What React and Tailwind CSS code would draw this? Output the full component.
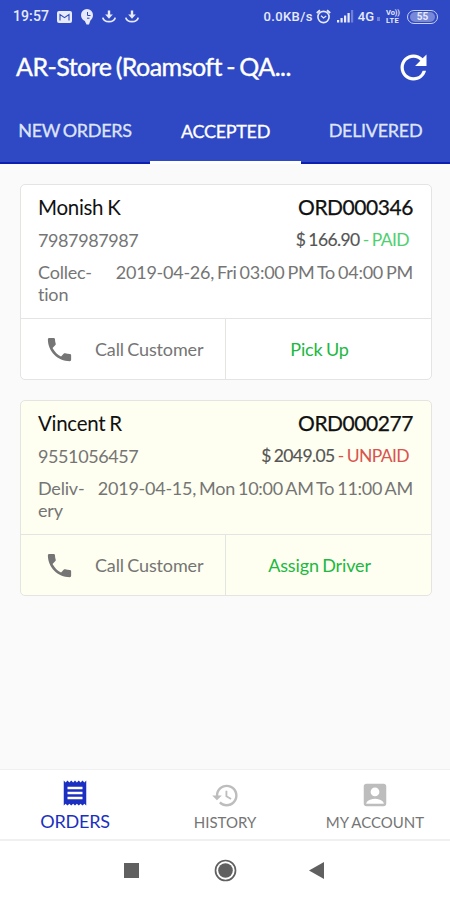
import { useState } from 'react';
import { MdRefresh, MdPhone, MdReceipt, MdHistory, MdAccountBox } from 'react-icons/md';

const orders = [
  {
    id: 'ORD000346',
    name: 'Monish K',
    phone: '7987987987',
    amount: '$ 166.90',
    status: 'PAID',
    type: ['Collec-', 'tion'],
    slot: '2019-04-26, Fri 03:00 PM To 04:00 PM',
    action: 'Pick Up',
  },
  {
    id: 'ORD000277',
    name: 'Vincent R',
    phone: '9551056457',
    amount: '$ 2049.05',
    status: 'UNPAID',
    type: ['Deliv-', 'ery'],
    slot: '2019-04-15, Mon 10:00 AM To 11:00 AM',
    action: 'Assign Driver',
  },
];

const tabs = ['NEW ORDERS', 'ACCEPTED', 'DELIVERED'];

function DownloadIcon() {
  return (
    <svg width="14" height="14" viewBox="0 0 14 14" fill="none" stroke="currentColor">
      <path d="M7 0.5v5" strokeWidth="2.4" />
      <path d="M3.2 4.4h7.6L7 8.8z" fill="currentColor" stroke="none" />
      <path d="M0.8 7.6c1.2 5.4 11.2 5.4 12.4 0" strokeWidth="1.8" />
    </svg>
  );
}

function StatusBar() {
  return (
    <div className="flex h-[33px] items-center pl-[13px] pr-[12px] font-[Roboto] text-[#e6eafb]">
      <span className="w-[37px] text-[14px] font-medium tracking-[0.1px]">19:57</span>
      <svg className="ml-[7px]" width="15" height="12" viewBox="0 0 15 12">
        <rect width="15" height="12" rx="2" fill="currentColor" />
        <path d="M3 9.5v-6l4.5 3.2L12 3.5v6" fill="none" stroke="#2f49c4" strokeWidth="1.1" />
      </svg>
      <svg className="ml-[9px]" width="12" height="16" viewBox="0 0 12 16">
        <path d="M6 0a6 6 0 0 1 6 6c0 2.6-1.2 4.2-2.6 5.4L8 15.500H5.500L3.800 12C1.600 11 0 9 0 6a6 6 0 0 1 6-6z" fill="currentColor" />
        <path d="M6.500 3v3.500H9.500M6 9.200h2.500" fill="none" stroke="#2f49c4" strokeWidth="1" />
      </svg>
      <span className="ml-[9px]"><DownloadIcon /></span>
      <span className="ml-[9px]"><DownloadIcon /></span>

      <div className="ml-auto flex items-center">
        <span className="text-[13px] font-medium tracking-[0.4px]">0.0KB/s</span>
        <svg className="ml-[3px]" width="15" height="15" viewBox="0 0 15 15" fill="none" stroke="currentColor">
          <circle cx="7.5" cy="8" r="5.6" strokeWidth="1.6" />
          <path d="M0.8 4L4 1.200M14.200 4L11 1.200" strokeWidth="1.800" />
          <path d="M5 6.800L7.500 9l2.700-2" strokeWidth="1.2" />
        </svg>
        <svg className="ml-[6px]" width="17" height="13" viewBox="0 0 17 13" fill="currentColor">
          <rect x="0" y="10" width="2.2" height="2.5" />
          <rect x="3.5" y="8" width="2.2" height="4.5" />
          <rect x="7" y="5.5" width="2.2" height="7" />
          <rect x="10.5" y="3" width="2.2" height="9.5" />
          <rect x="14" y="0" width="2.2" height="12.5" opacity="0.35" />
        </svg>
        <span className="ml-[4px] text-[13px] font-medium">4G</span>
        <span className="ml-[3px] mt-1 h-[4px] w-[3px] bg-white/30" />
        <span className="ml-[6px] flex w-[15px] flex-col text-[7.5px] font-bold leading-[8px]">
          <span className="tracking-[-0.1px]">Vo))</span>
          <span className="tracking-[0.3px]">LTE</span>
        </span>
        <span className="ml-[6px] flex h-[14px] w-[31px] items-center justify-center rounded-full border-[1.5px] border-[#c9d1f5]">
          <span className="flex h-[10px] w-[25px] items-center justify-center rounded-full bg-white/35 text-[10px] font-bold leading-none">55</span>
        </span>
      </div>
    </div>
  );
}

function OrderCard({ order }) {
  const paid = order.status === 'PAID';

  return (
    <div className={`h-[196px] overflow-hidden rounded-[5px] border border-[#e4e4e2] ${paid ? 'bg-white' : 'bg-[#fefff0]'}`}>
      <div className="h-[134px] border-b border-[#e4e4e2] pl-[17px] pr-[18px] pt-[8px] text-[18px] text-[#757575]">
        <div className="flex justify-between leading-[28px] text-[#111]">
          <span className="text-[20.5px] tracking-[-0.3px] [word-spacing:-1px]">{order.name}</span>
          <span className="text-[21px] tracking-[-0.45px] [-webkit-text-stroke:0.25px]">{order.id}</span>
        </div>
        <div className="mt-[7px] flex justify-between leading-[24px]">
          <span className="tracking-[-0.4px]">{order.phone}</span>
          <span className="pr-[4px] text-[17.5px] tracking-[-0.6px] [word-spacing:-0.8px]">
            <span className="text-[#555] [-webkit-text-stroke:0.15px]">{order.amount}</span>
            <span className={paid ? 'text-[#4fd070]' : 'text-[#d9534f]'}> - {order.status}</span>
          </span>
        </div>
        <div className="mt-[9px] flex justify-between leading-[22px]">
          <span className="tracking-[-0.2px]">{order.type[0]}<br />{order.type[1]}</span>
          <span className="whitespace-nowrap tracking-[-0.25px] [word-spacing:-1.4px]">{order.slot}</span>
        </div>
      </div>
      {/* Card actions */}
      <div className="flex h-[60px] text-[18px] tracking-[-0.15px]">
        <button className="flex w-[205px] items-center border-r border-[#e4e4e2] pl-[23px] text-[#757575] [word-spacing:-1px]">
          <MdPhone size={31} />
          <span className="ml-[20px]">Call Customer</span>
        </button>
        <button className="w-[187px] text-[#20b83f] [word-spacing:-1px]">{order.action}</button>
      </div>
    </div>
  );
}

export default function App() {
  const [activeTab, setActiveTab] = useState('ACCEPTED');

  return (
    <div className="flex h-[900px] w-[450px] flex-col overflow-hidden bg-[#fafafa] font-[Lato,sans-serif]">
      {/* Header */}
      <header className="h-[164px] bg-[#2f49c4] text-white">
        <StatusBar />
        <div className="flex h-[68px] items-center justify-between pl-[16px] pr-[17px]">
          <h1 className="text-[25px] tracking-[-0.55px] [-webkit-text-stroke:0.4px] [word-spacing:-1.5px]">AR-Store (Roamsoft - QA...</h1>
          <MdRefresh size={39} />
        </div>
        <div className="grid h-[63px] grid-cols-[150px_151px_149px]">
          {tabs.map((tab) => (
            <button
              key={tab}
              onClick={() => setActiveTab(tab)}
              className={`text-[18px] tracking-[-0.3px] [-webkit-text-stroke:0.3px] [word-spacing:-1.5px] ${
                activeTab === tab
                  ? 'border-b-[3px] border-white text-white'
                  : 'border-b-2 border-[#0d1fae] pb-[2px] text-[#dfe4f8]'
              }`}
            >
              {tab}
            </button>
          ))}
        </div>
      </header>

      {/* Orders */}
      <main className="flex flex-1 flex-col gap-[20px] pl-[20px] pr-[18px] pt-[20px]">
        {orders.map((order) => (
          <OrderCard key={order.id} order={order} />
        ))}
      </main>

      {/* Bottom navigation */}
      <nav className="grid h-[72px] grid-cols-3 border-b-2 border-t border-[#f0f0f0] bg-white text-[#757575]">
        <div className="flex flex-col items-center pt-[8px] text-[#1b2fc0]">
          <MdReceipt size={30} />
          <span className="mt-[1px] text-[18px] leading-[24px] tracking-[-0.2px]">ORDERS</span>
        </div>
        <div className="flex flex-col items-center pt-[11px]">
          <MdHistory size={29} className="text-[#bdbdbd]" />
          <span className="text-[15px] leading-[24px]">HISTORY</span>
        </div>
        <div className="flex flex-col items-center pt-[10px]">
          <MdAccountBox size={30} className="text-[#bdbdbd]" />
          <span className="text-[15px] leading-[24px] [word-spacing:-0.5px]">MY ACCOUNT</span>
        </div>
      </nav>

      {/* System buttons */}
      <div className="flex h-[59px] items-center bg-white pl-[124px] text-[#606060]">
        <span className="h-[15px] w-[15px] bg-current" />
        <svg className="ml-[75px]" width="23" height="23" viewBox="0 0 23 23">
          <circle cx="11.5" cy="11.5" r="10" fill="none" stroke="currentColor" strokeWidth="1.7" />
          <circle cx="11.5" cy="11.5" r="7.3" fill="currentColor" />
        </svg>
        <svg className="ml-[72px]" width="15" height="17" viewBox="0 0 15 17">
          <path d="M15 0v17L0 8.5z" fill="currentColor" />
        </svg>
      </div>
    </div>
  );
}
